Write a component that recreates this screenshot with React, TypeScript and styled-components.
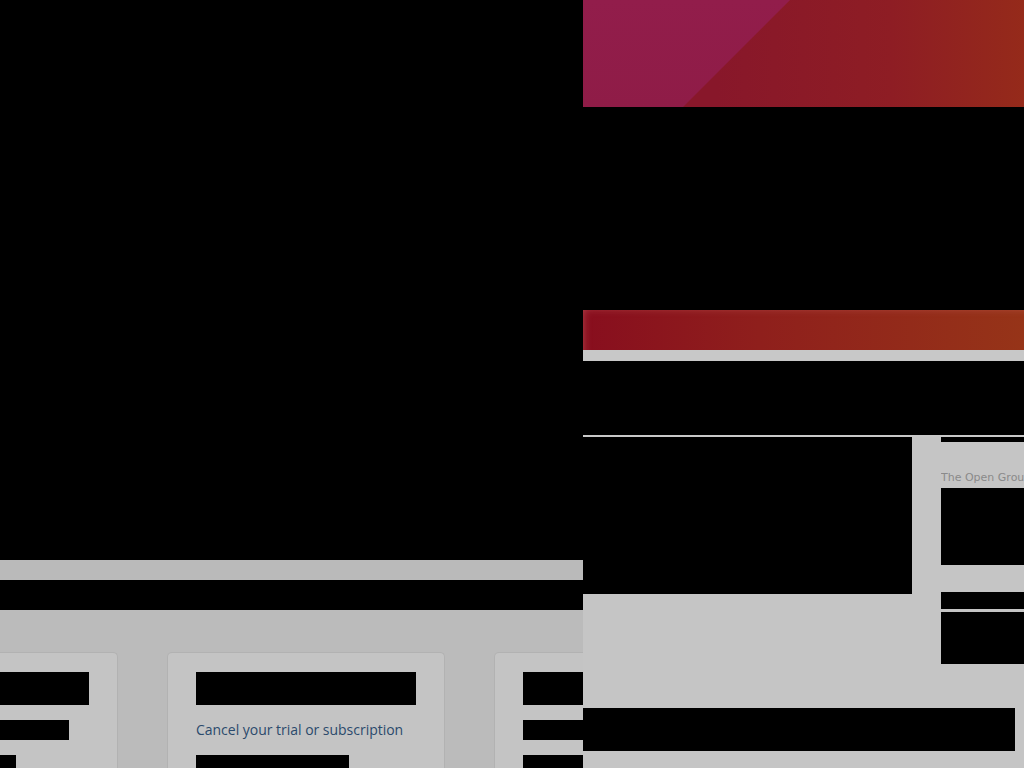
import React from "react";
import styled, { createGlobalStyle } from "styled-components";

const Global = createGlobalStyle`
  html, body { margin: 0; padding: 0; background: #000; }
  body { font-family: "Liberation Sans", Arial, sans-serif; }
`;

const Page = styled.div`
  display: flex;
  width: 1024px;
  height: 768px;
  overflow: hidden;
  background: #000;
`;

const LeftCol = styled.div`
  width: 583px;
  flex: none;
  display: flex;
  flex-direction: column;
  overflow: hidden;
`;

const Redacted = styled.div<{ $h?: number; $w?: number }>`
  background: #000;
  height: ${(p) => (p.$h ? `${p.$h}px` : "auto")};
  width: ${(p) => (p.$w ? `${p.$w}px` : "auto")};
  flex: none;
`;

const Strip = styled.div<{ $h: number; $bg: string }>`
  height: ${(p) => p.$h}px;
  background: ${(p) => p.$bg};
  flex: none;
`;

const CardArea = styled.div`
  flex: 1;
  background: #bbbbbb;
  padding-top: 42px;
  display: flex;
  gap: 49px;
  margin-left: -160px;
`;

const Card = styled.div`
  width: 278px;
  flex: none;
  background: #c4c4c4;
  border: 1px solid #b2b2b2;
  border-bottom: none;
  border-radius: 5px 5px 0 0;
  box-sizing: border-box;
  padding: 19px 0 0 28px;
  display: flex;
  flex-direction: column;
`;

const CardTitle = styled.div<{ $w: number }>`
  width: ${(p) => p.$w}px;
  height: 33px;
  background: #000;
`;

const CardLine = styled.div<{ $w: number }>`
  width: ${(p) => p.$w}px;
  height: 20px;
  margin-top: 15px;
  background: #000;
`;

const CardLink = styled.a`
  margin-top: 15px;
  height: 20px;
  display: block;
  font-family: "Open Sans", "Liberation Sans", sans-serif;
  font-size: 14px;
  letter-spacing: -0.02px;
  line-height: 20px;
  color: #2b4a6c;
  text-decoration: none;
  white-space: nowrap;
`;

const CardFoot = styled.div<{ $w: number }>`
  width: ${(p) => p.$w}px;
  height: 20px;
  margin-top: 15px;
  background: #000;
`;

const RightCol = styled.div`
  width: 441px;
  flex: none;
  display: flex;
  flex-direction: column;
  background: #c5c5c5;
  overflow: hidden;
`;

const Hero = styled.div`
  position: relative;
  height: 107px;
  flex: none;
  background: linear-gradient(to right, #88172a 30%, #8e1d24 70%, #952a1a);
  &::before {
    content: "";
    position: absolute;
    inset: 0;
    background: linear-gradient(to bottom, #921d4b, #8f1c47);
    clip-path: polygon(0 0, 207px 0, 100px 100%, 0 100%);
  }
`;

const RedBar = styled.div`
  height: 40px;
  flex: none;
  background: linear-gradient(to right, #880e1e, #8f1f1c 40%, #963418);
  box-shadow: inset 6px 4px 8px -6px rgba(220, 120, 120, 0.5);
`;

const Divider = styled.div`
  height: 2px;
  background: #c8c8c8;
  flex: none;
`;

const Body = styled.div`
  display: flex;
  align-items: flex-start;
  gap: 29px;
  flex: none;
`;

const MainBox = styled.div`
  width: 329px;
  height: 157px;
  background: #000;
  flex: none;
`;

const Side = styled.div`
  flex: none;
  width: 200px;
  display: flex;
  flex-direction: column;
`;

const SideText = styled.div`
  margin-top: 26px;
  height: 20px;
  width: 83px;
  overflow: hidden;
  font-family: "DejaVu Sans", Verdana, sans-serif;
  font-size: 11px;
  line-height: 20px;
  color: #8a8a8a;
  white-space: nowrap;
`;

const SideBlock = styled.div<{ $h: number; $mt: number }>`
  height: ${(p) => p.$h}px;
  margin-top: ${(p) => p.$mt}px;
  background: #000;
`;

const BottomBar = styled.div`
  margin-top: 44px;
  width: 432px;
  height: 43px;
  background: #000;
  flex: none;
`;

export default function App() {
  return (
    <>
      <Global />
      <Page>
        <LeftCol>
          <Redacted $h={560} />
          <Strip $h={20} $bg="#bababa" />
          <Redacted $h={30} />
          <CardArea>
            <Card>
              <CardTitle $w={220} />
              <CardLine $w={200} />
              <CardFoot $w={147} />
            </Card>
            <Card>
              <CardTitle $w={220} />
              <CardLink href="#">Cancel your trial or subscription</CardLink>
              <CardFoot $w={153} />
            </Card>
            <Card>
              <CardTitle $w={220} />
              <CardLine $w={200} />
              <CardFoot $w={160} />
            </Card>
          </CardArea>
        </LeftCol>
        <RightCol>
          <Hero />
          <Redacted $h={203} />
          <RedBar />
          <Strip $h={11} $bg="#c8c8c8" />
          <Redacted $h={74} />
          <Divider />
          <Body>
            <MainBox />
            <Side>
              <SideBlock $h={5} $mt={0} />
              <SideText>The Open Group</SideText>
              <SideBlock $h={77} $mt={0} />
              <SideBlock $h={17} $mt={27} />
              <SideBlock $h={52} $mt={3} />
            </Side>
          </Body>
          <BottomBar />
        </RightCol>
      </Page>
    </>
  );
}
